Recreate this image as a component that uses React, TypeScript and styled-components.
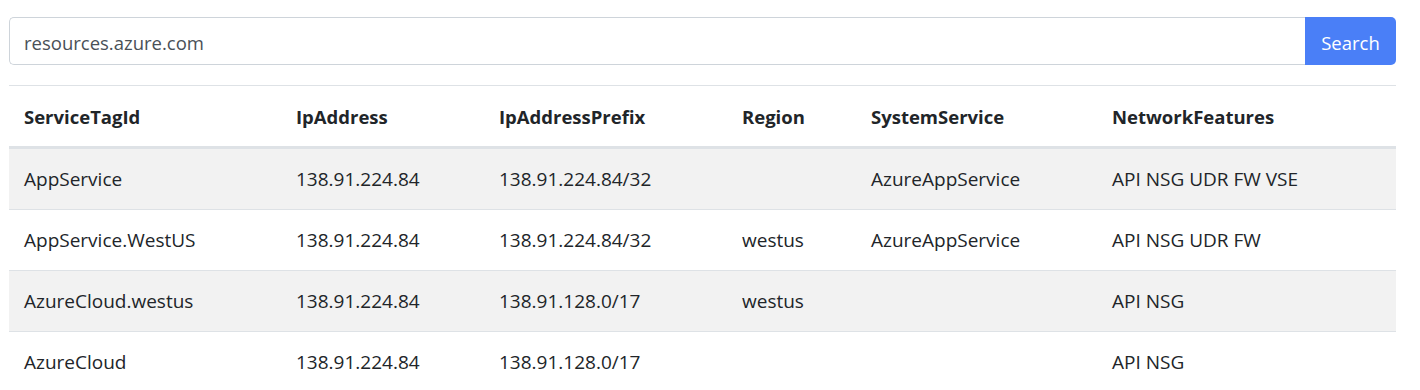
import React from "react";
import styled, { createGlobalStyle } from "styled-components";

const GlobalStyle = createGlobalStyle`
body {
    margin: 0;
    background: #ffffff;
    font-family: "Open Sans", "Noto Sans", "Liberation Sans", sans-serif;
    color: #212529;
}
`;

const columns = [
    { title: "ServiceTagId", width: 272 },
    { title: "IpAddress", width: 203 },
    { title: "IpAddressPrefix", width: 243 },
    { title: "Region", width: 129 },
    { title: "SystemService", width: 241 },
    { title: "NetworkFeatures", width: 299 },
];

const rows = [
    ["AppService", "138.91.224.84", "138.91.224.84/32", "", "AzureAppService", "API NSG UDR FW VSE"],
    ["AppService.WestUS", "138.91.224.84", "138.91.224.84/32", "westus", "AzureAppService", "API NSG UDR FW"],
    ["AzureCloud.westus", "138.91.224.84", "138.91.128.0/17", "westus", "", "API NSG"],
    ["AzureCloud", "138.91.224.84", "138.91.128.0/17", "", "", "API NSG"],
];

const App = () => {
    return (
        <Page>
            <GlobalStyle />

            <SearchBar>
                <SearchInput defaultValue="resources.azure.com" />
                <SearchButton>Search</SearchButton>
            </SearchBar>

            <Table>
                <colgroup>
                    {columns.map((c) => (
                        <col key={c.title} style={{ width: c.width }} />
                    ))}
                </colgroup>
                <thead>
                    <tr>
                        {columns.map((c) => (
                            <Th key={c.title}>{c.title}</Th>
                        ))}
                    </tr>
                </thead>
                <tbody>
                    {rows.map((r, i) => (
                        <Row key={i} striped={i % 2 === 0}>
                            {r.map((cell, j) => (
                                <Td key={j}>{cell}</Td>
                            ))}
                        </Row>
                    ))}
                </tbody>
            </Table>
        </Page>
    );
};

export default App;

const Page = styled.div`
padding: 17px 24px 0 9px;
`;

const SearchBar = styled.div`
display: flex;
height: 48px;
margin-bottom: 20px;
`;

const SearchInput = styled.input`
flex: 1;
min-width: 0;
height: 100%;
box-sizing: border-box;
border: 1px solid #ced4da;
border-right: none;
border-radius: 5px 0 0 5px;
padding: 2px 14px 0;
font-family: inherit;
font-size: 18.5px;
color: #495057;
outline: none;
`;

const SearchButton = styled.button`
width: 91px;
height: 100%;
border: none;
border-radius: 0 5px 5px 0;
background-color: #4a7ff7;
color: #ffffff;
font-family: inherit;
font-size: 18.5px;
padding: 2px 0 0;
cursor: pointer;
`;

const Table = styled.table`
width: 100%;
table-layout: fixed;
border-collapse: collapse;
border-top: 1px solid #dee2e6;
font-size: 19px;
line-height: 27px;
`;

const Th = styled.th`
text-align: left;
font-weight: 700;
font-size: 18.5px;
padding: 17px 15px 16px;
border-bottom: 3px solid #dee2e6;
white-space: nowrap;
`;

const Row = styled.tr<{ striped: boolean }>`
background-color: ${(p) => (p.striped ? "#f2f2f2" : "#ffffff")};
`;

const Td = styled.td`
padding: 17px 15px 16px;
border-bottom: 1px solid #dee2e6;
white-space: nowrap;
`;
